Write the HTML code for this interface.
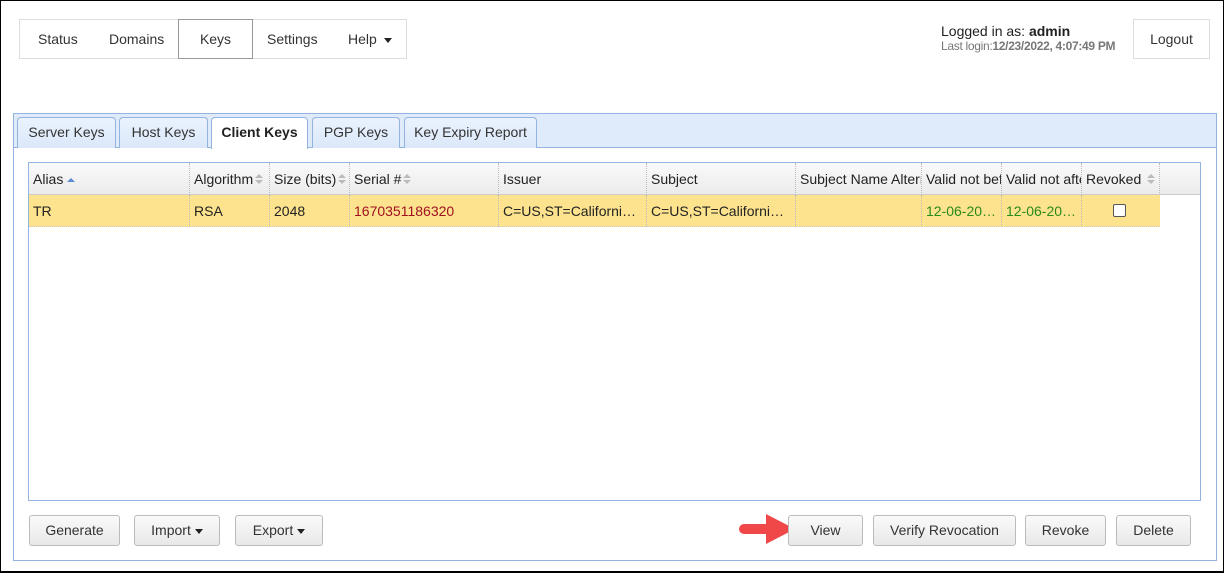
<!DOCTYPE html>
<html><head><style>
*{box-sizing:border-box;margin:0;padding:0}
body{width:1224px;height:573px;font-family:"Liberation Sans",Arial,sans-serif;font-size:14px;color:#333;background:#fff;position:relative;overflow:hidden}
.frame{position:absolute;left:0;top:0;width:1224px;height:573px;border:1px solid #000;border-bottom-width:2px}
.abs{position:absolute}
.nav{left:19px;top:19px;width:388px;height:40px;border:1px solid #ddd}
.nav span{position:absolute;top:11px}
.keys{left:178px;top:19px;width:75px;height:40px;border:1px solid #999}
.logout{left:1133px;top:19px;width:77px;height:40px;border:1px solid #ddd;text-align:center;line-height:38px}
.panel{left:13px;top:113px;width:1204px;height:448px;border:1px solid #93b4e0}
.tabbar{left:14px;top:114px;width:1202px;height:34px;background:#dfeafb;border-bottom:1px solid #93b4e0}
.tab{position:absolute;top:117px;height:31px;border:1px solid #93b4e0;border-bottom:none;border-radius:4px 4px 0 0;background:linear-gradient(#eaf2fd,#dbe8fa);text-align:center;line-height:29px;font-size:14px}
.tab.act{background:#fff;font-weight:bold;height:32px;color:#222}
.grid{left:28px;top:162px;width:1173px;height:339px;border:1px solid #93b4e0}
.hdr{left:29px;top:163px;width:1171px;height:32px;background:linear-gradient(#fafafa,#ebebeb);border-bottom:1px solid #ccc}
.c{position:absolute;height:32px;line-height:32px;padding-left:4px;white-space:nowrap;overflow:hidden;border-right:1px dotted #bbb}
.row{left:29px;top:195px;width:1131px;height:32px;background:#fde38e;border-bottom:1px dotted #ccc}
.s{display:inline-block;vertical-align:middle;margin-left:2px;width:8px;height:12px;position:relative}
.s:before{content:"";position:absolute;left:0;top:0;border:4px solid transparent;border-bottom:4px solid #bbb;border-top:none}
.s:after{content:"";position:absolute;left:0;top:6px;border:4px solid transparent;border-top:4px solid #bbb;border-bottom:none}
.btn{position:absolute;top:515px;height:31px;border:1px solid #bbb;border-radius:3px;background:linear-gradient(#fafafa,#e8e8e8);text-align:center;line-height:29px;font-size:14px;color:#333}
.dd{display:inline-block;vertical-align:middle;margin-left:4px;border:4px solid transparent;border-top:5px solid #222;border-bottom:none}
</style></head><body>
<div class="frame"></div>
<div class="abs nav">
<span style="left:18px">Status</span><span style="left:89px">Domains</span><span style="left:247px">Settings</span><span style="left:328px">Help<i class="dd" style="margin-left:7px"></i></span>
</div>
<div class="abs keys" style="text-align:center;line-height:38px">Keys</div>
<div class="abs" style="left:941px;top:23px;font-size:14px;color:#222">Logged in as: <b>admin</b></div>
<div class="abs" style="left:941px;top:39px;font-size:12px;color:#777;letter-spacing:-0.3px">Last login:<b>12/23/2022, 4:07:49 PM</b></div>
<div class="abs logout">Logout</div>
<div class="abs panel"></div>
<div class="abs tabbar"></div>
<div class="tab" style="left:17px;width:99px">Server Keys</div>
<div class="tab" style="left:119px;width:89px">Host Keys</div>
<div class="tab act" style="left:211px;width:97px">Client Keys</div>
<div class="tab" style="left:312px;width:88px">PGP Keys</div>
<div class="tab" style="left:404px;width:133px">Key Expiry Report</div>
<div class="abs grid"></div>
<div class="abs hdr">
<div class="c" style="left:0;width:161px;color:#222">Alias <i style="display:inline-block;vertical-align:middle;border:4px solid transparent;border-bottom:4px solid #5b8bd0;border-top:none"></i></div>
<div class="c" style="left:161px;width:80px;color:#222">Algorithm<i class="s"></i></div>
<div class="c" style="left:241px;width:80px;color:#222">Size (bits)<i class="s"></i></div>
<div class="c" style="left:321px;width:149px;color:#222">Serial #<i class="s"></i></div>
<div class="c" style="left:470px;width:148px;color:#222">Issuer</div>
<div class="c" style="left:618px;width:149px;color:#222">Subject</div>
<div class="c" style="left:767px;width:126px;color:#222">Subject Name Alternative</div>
<div class="c" style="left:893px;width:80px;color:#222">Valid not before</div>
<div class="c" style="left:973px;width:80px;color:#222">Valid not after</div>
<div class="c" style="left:1053px;width:78px;color:#222">Revoked <i class="s"></i></div>
</div>
<div class="abs row">
<div class="c" style="left:0;width:161px;color:#222">TR</div>
<div class="c" style="left:161px;width:80px;color:#222">RSA</div>
<div class="c" style="left:241px;width:80px;color:#222">2048</div>
<div class="c" style="left:321px;width:149px;color:#a01020">1670351186320</div>
<div class="c" style="left:470px;width:148px;color:#222">C=US,ST=Californi…</div>
<div class="c" style="left:618px;width:149px;color:#222">C=US,ST=Californi…</div>
<div class="c" style="left:767px;width:126px"></div>
<div class="c" style="left:893px;width:80px;color:#2a8a1a">12-06-20…</div>
<div class="c" style="left:973px;width:80px;color:#2a8a1a">12-06-20…</div>
<div class="c" style="left:1053px;width:78px;border-right:none"><div style="position:absolute;left:31px;top:9px;width:13px;height:13px;border:1px solid #555;border-radius:2px;background:#fff"></div></div>
</div>
<div class="btn" style="left:29px;width:91px">Generate</div>
<div class="btn" style="left:134px;width:86px">Import<i class="dd"></i></div>
<div class="btn" style="left:235px;width:88px">Export<i class="dd"></i></div>
<svg class="abs" style="left:738px;top:513px" width="58" height="32"><path d="M6 11 H28 V1 L57 16 L28 31 V21 H6 A5 5 0 0 1 6 11Z" fill="#f04848"/></svg>
<div class="btn" style="left:788px;width:75px">View</div>
<div class="btn" style="left:873px;width:143px">Verify Revocation</div>
<div class="btn" style="left:1025px;width:81px">Revoke</div>
<div class="btn" style="left:1116px;width:75px">Delete</div>
</body></html>
